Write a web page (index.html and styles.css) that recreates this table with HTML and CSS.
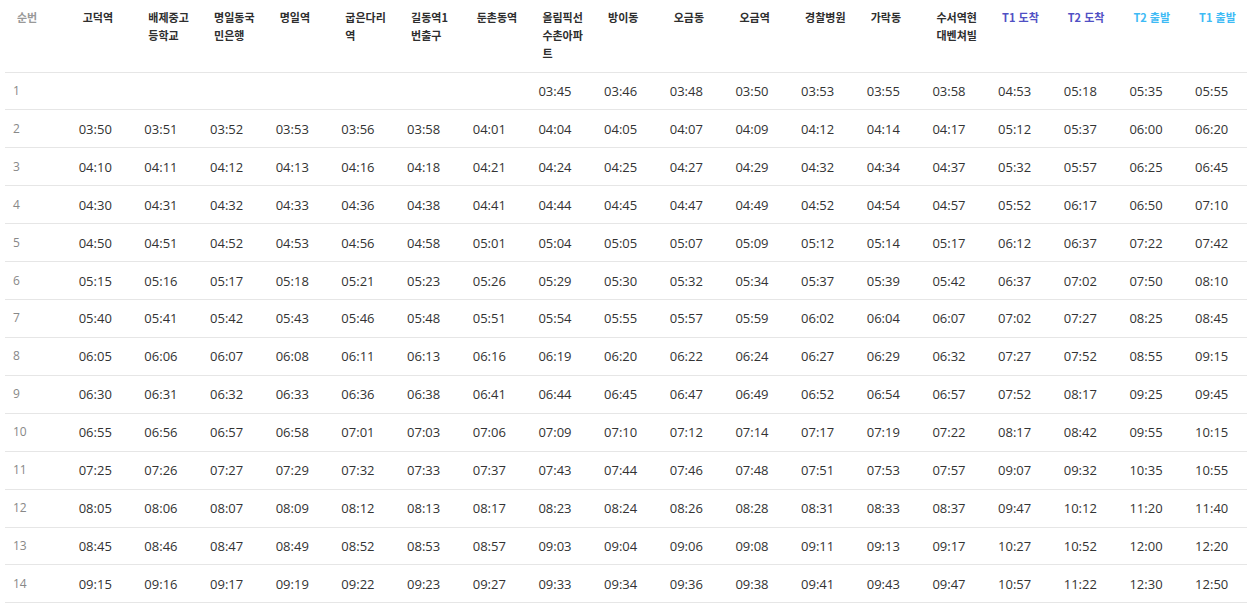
FILE: index.html
```html
<!DOCTYPE html>
<html lang="ko">
<head>
<meta charset="utf-8">
<title>시간표</title>
<link rel="stylesheet" href="styles.css">
</head>
<body>
<div class="wrap">
<table class="timetable">
<thead>
<tr>
<th class="no">순번</th>
<th>고덕역</th>
<th>배제중고등학교</th>
<th>명일동국민은행</th>
<th>명일역</th>
<th>굽은다리역</th>
<th>길동역1번출구</th>
<th>둔촌동역</th>
<th>올림픽선수촌아파트</th>
<th>방이동</th>
<th>오금동</th>
<th>오금역</th>
<th>경찰병원</th>
<th>가락동</th>
<th>수서역현대벤쳐빌</th>
<th class="arr">T1 도착</th>
<th class="arr">T2 도착</th>
<th class="dep">T2 출발</th>
<th class="dep">T1 출발</th>
</tr>
</thead>
<tbody>
<tr><td class="no">1</td><td></td><td></td><td></td><td></td><td></td><td></td><td></td><td>03:45</td><td>03:46</td><td>03:48</td><td>03:50</td><td>03:53</td><td>03:55</td><td>03:58</td><td>04:53</td><td>05:18</td><td>05:35</td><td>05:55</td></tr>
<tr><td class="no">2</td><td>03:50</td><td>03:51</td><td>03:52</td><td>03:53</td><td>03:56</td><td>03:58</td><td>04:01</td><td>04:04</td><td>04:05</td><td>04:07</td><td>04:09</td><td>04:12</td><td>04:14</td><td>04:17</td><td>05:12</td><td>05:37</td><td>06:00</td><td>06:20</td></tr>
<tr><td class="no">3</td><td>04:10</td><td>04:11</td><td>04:12</td><td>04:13</td><td>04:16</td><td>04:18</td><td>04:21</td><td>04:24</td><td>04:25</td><td>04:27</td><td>04:29</td><td>04:32</td><td>04:34</td><td>04:37</td><td>05:32</td><td>05:57</td><td>06:25</td><td>06:45</td></tr>
<tr><td class="no">4</td><td>04:30</td><td>04:31</td><td>04:32</td><td>04:33</td><td>04:36</td><td>04:38</td><td>04:41</td><td>04:44</td><td>04:45</td><td>04:47</td><td>04:49</td><td>04:52</td><td>04:54</td><td>04:57</td><td>05:52</td><td>06:17</td><td>06:50</td><td>07:10</td></tr>
<tr><td class="no">5</td><td>04:50</td><td>04:51</td><td>04:52</td><td>04:53</td><td>04:56</td><td>04:58</td><td>05:01</td><td>05:04</td><td>05:05</td><td>05:07</td><td>05:09</td><td>05:12</td><td>05:14</td><td>05:17</td><td>06:12</td><td>06:37</td><td>07:22</td><td>07:42</td></tr>
<tr><td class="no">6</td><td>05:15</td><td>05:16</td><td>05:17</td><td>05:18</td><td>05:21</td><td>05:23</td><td>05:26</td><td>05:29</td><td>05:30</td><td>05:32</td><td>05:34</td><td>05:37</td><td>05:39</td><td>05:42</td><td>06:37</td><td>07:02</td><td>07:50</td><td>08:10</td></tr>
<tr><td class="no">7</td><td>05:40</td><td>05:41</td><td>05:42</td><td>05:43</td><td>05:46</td><td>05:48</td><td>05:51</td><td>05:54</td><td>05:55</td><td>05:57</td><td>05:59</td><td>06:02</td><td>06:04</td><td>06:07</td><td>07:02</td><td>07:27</td><td>08:25</td><td>08:45</td></tr>
<tr><td class="no">8</td><td>06:05</td><td>06:06</td><td>06:07</td><td>06:08</td><td>06:11</td><td>06:13</td><td>06:16</td><td>06:19</td><td>06:20</td><td>06:22</td><td>06:24</td><td>06:27</td><td>06:29</td><td>06:32</td><td>07:27</td><td>07:52</td><td>08:55</td><td>09:15</td></tr>
<tr><td class="no">9</td><td>06:30</td><td>06:31</td><td>06:32</td><td>06:33</td><td>06:36</td><td>06:38</td><td>06:41</td><td>06:44</td><td>06:45</td><td>06:47</td><td>06:49</td><td>06:52</td><td>06:54</td><td>06:57</td><td>07:52</td><td>08:17</td><td>09:25</td><td>09:45</td></tr>
<tr><td class="no">10</td><td>06:55</td><td>06:56</td><td>06:57</td><td>06:58</td><td>07:01</td><td>07:03</td><td>07:06</td><td>07:09</td><td>07:10</td><td>07:12</td><td>07:14</td><td>07:17</td><td>07:19</td><td>07:22</td><td>08:17</td><td>08:42</td><td>09:55</td><td>10:15</td></tr>
<tr><td class="no">11</td><td>07:25</td><td>07:26</td><td>07:27</td><td>07:29</td><td>07:32</td><td>07:33</td><td>07:37</td><td>07:43</td><td>07:44</td><td>07:46</td><td>07:48</td><td>07:51</td><td>07:53</td><td>07:57</td><td>09:07</td><td>09:32</td><td>10:35</td><td>10:55</td></tr>
<tr><td class="no">12</td><td>08:05</td><td>08:06</td><td>08:07</td><td>08:09</td><td>08:12</td><td>08:13</td><td>08:17</td><td>08:23</td><td>08:24</td><td>08:26</td><td>08:28</td><td>08:31</td><td>08:33</td><td>08:37</td><td>09:47</td><td>10:12</td><td>11:20</td><td>11:40</td></tr>
<tr><td class="no">13</td><td>08:45</td><td>08:46</td><td>08:47</td><td>08:49</td><td>08:52</td><td>08:53</td><td>08:57</td><td>09:03</td><td>09:04</td><td>09:06</td><td>09:08</td><td>09:11</td><td>09:13</td><td>09:17</td><td>10:27</td><td>10:52</td><td>12:00</td><td>12:20</td></tr>
<tr><td class="no">14</td><td>09:15</td><td>09:16</td><td>09:17</td><td>09:19</td><td>09:22</td><td>09:23</td><td>09:27</td><td>09:33</td><td>09:34</td><td>09:36</td><td>09:38</td><td>09:41</td><td>09:43</td><td>09:47</td><td>10:57</td><td>11:22</td><td>12:30</td><td>12:50</td></tr>
</tbody>
</table>
</div>
</body>
</html>
```
FILE: styles.css
```css
html, body {
  margin: 0;
  padding: 0;
  background: #fff;
  overflow: hidden;
}
.wrap {
  padding-left: 5px;
}
.timetable {
  width: 1248px;
  table-layout: fixed;
  border-collapse: collapse;
  font-family: "Open Sans", "Noto Sans CJK KR", sans-serif;
  color: #333;
}
.timetable th {
  height: 72px;
  box-sizing: border-box;
  padding: 8px 9px 0 12px;
  vertical-align: top;
  text-align: left;
  font-family: "Noto Sans CJK KR", sans-serif;
  font-size: 11px;
  line-height: 18px;
  font-weight: 700;
  color: #2e2e2e;
  border-bottom: 1px solid #e6e6e6;
}
.timetable th.no {
  color: #999;
}
.timetable th.arr {
  color: #5050c4;
}
.timetable th.dep {
  color: #3dbaf5;
}
.timetable td {
  height: 37.93px;
  box-sizing: border-box;
  padding: 0 8px;
  vertical-align: middle;
  font-size: 13px;
  line-height: 18px;
  border-bottom: 1px solid #e6e6e6;
  white-space: nowrap;
}
.timetable td.no {
  color: #888;
  font-size: 12px;
}
```
